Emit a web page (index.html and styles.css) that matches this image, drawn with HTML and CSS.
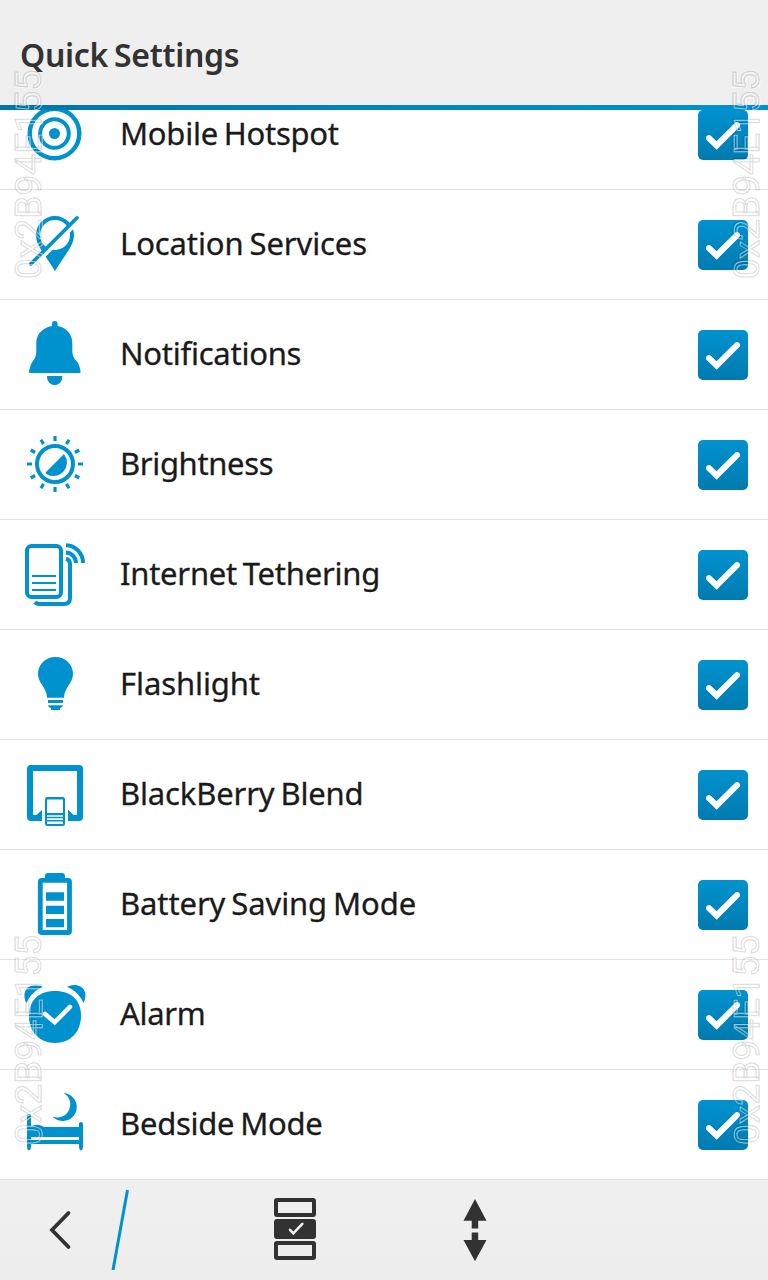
FILE: index.html
```html
<!DOCTYPE html>
<html lang="en">
<head>
  <meta charset="UTF-8" />
  <meta name="viewport" content="width=device-width, initial-scale=1" />
  <title>Quick Settings</title>
  <link rel="stylesheet" href="styles.css">
</head>
<body>

  <!-- Shared shapes -->
  <svg class="defs" width="0" height="0">
    <symbol id="check" viewBox="0 0 50 50">
      <path d="M11 28.2l7.6 7.3L39 15.2" fill="none" stroke="#fff" stroke-width="6" stroke-linecap="round"/>
    </symbol>
    <symbol id="serial" viewBox="0 0 48 220" overflow="visible">
      <g transform="translate(36.500 214) rotate(-90)" fill="none" font-family="Roboto, Liberation Sans, sans-serif" font-size="37">
        <text x="-1" y="1.300" textLength="209" stroke="#fff" stroke-opacity="0.6">0x2B94E155</text>
        <text textLength="209" stroke="#000" stroke-opacity="0.15" stroke-width="1.2">0x2B94E155</text>
      </g>
    </symbol>
  </svg>

  <div class="screen">
    <header class="title-bar">
      <h1>Quick Settings</h1>
    </header>

    <ul class="settings">
      <li>
        <svg class="icon" viewBox="0 0 120 109">
          <circle cx="54.5" cy="53.5" r="24.8" class="line" stroke-width="4.4"/>
          <circle cx="54.5" cy="53.5" r="14.3" class="line" stroke-width="4"/>
          <circle cx="54.5" cy="53.5" r="5.5"/>
        </svg>
        <span class="label hotspot">Mobile Hotspot</span>
        <span class="checkbox"><svg><use href="#check"/></svg></span>
      </li>
      <li>
        <svg class="icon" viewBox="0 0 120 109">
          <path fill-rule="evenodd" d="M55 26a19 19 0 0 1 19 19c0 10-7 17-19 36C43 62 36 55 36 45a19 19 0 0 1 19-19zM55 30a15 15 0 1 0 0 30a15 15 0 0 0 0-30z"/>
          <path d="M33 76.5L79.500 30" stroke="#fff" stroke-width="4"/>
          <path d="M30.8 74L77 27.8" class="line" stroke-width="3.6" stroke-linecap="round"/>
        </svg>
        <span class="label location">Location Services</span>
        <span class="checkbox"><svg><use href="#check"/></svg></span>
      </li>
      <li>
        <svg class="icon" viewBox="0 0 120 109">
          <path d="M52 26v-2.200a2.800 2.800 0 0 1 5.600 0V26C66 27.500 72.300 34 72.300 43v8c0 4 1.200 7 4 9.800C79 63.500 80 68 80.600 71.500q.2 1.500-1.500 1.500H30.500q-1.700 0-1.500-1.500C29.600 68 31 63.500 33 60.800c2.400-2.800 3.300-5.800 3.300-9.800v-8C36.300 34 43 27.500 52 26z"/>
          <path d="M47 76h15.300v1a7.600 8.200 0 0 1-15.300 0z"/>
        </svg>
        <span class="label notifications">Notifications</span>
        <span class="checkbox"><svg><use href="#check"/></svg></span>
      </li>
      <li>
        <svg class="icon" viewBox="0 0 120 109">
          <circle cx="55" cy="54" r="18" class="line" stroke-width="4"/>
          <path d="M64.300 44.400A13.500 13.500 0 0 1 46 63.700Q45 63 46 62L63 45Q63.700 44 64.300 44.400z"/>
          <g class="line" stroke-width="3.200">
            <path d="M55 26v5M55 77v5M27 54h5M78 54h5"/>
            <path d="M55 26v5M55 77v5M27 54h5M78 54h5" transform="rotate(30 55 54)"/>
            <path d="M55 26v5M55 77v5M27 54h5M78 54h5" transform="rotate(60 55 54)"/>
          </g>
        </svg>
        <span class="label brightness">Brightness</span>
        <span class="checkbox"><svg><use href="#check"/></svg></span>
      </li>
      <li>
        <svg class="icon" viewBox="0 0 120 109">
          <g class="line" stroke-width="4">
            <rect x="27" y="26" width="34" height="51" rx="4.500"/>
            <path d="M66 38.700q4 1 4 5V78q0 6-6 6H40q-3.500 0-5-2"/>
            <path d="M66 32.500A10.500 10.500 0 0 1 76 43M66 25.200A17.500 17.500 0 0 1 83 43"/>
          </g>
          <path d="M32 56h24M32 63h24M32 70h24" class="line" stroke-width="2"/>
        </svg>
        <span class="label tethering">Internet Tethering</span>
        <span class="checkbox"><svg><use href="#check"/></svg></span>
      </li>
      <li>
        <svg class="icon" viewBox="0 0 120 109">
          <path d="M55.500 27C65.500 27 73 34.500 73 44c0 9-9 14-9 23.700H47C47 58 38 53 38 44c0-9.500 7.500-17 17.500-17z"/>
          <path d="M48 70h15v3H48zM48 75.300h15q-.5 2-3 3V80h-9v-1.700q-2.500-1-3-3z"/>
        </svg>
        <span class="label flashlight">Flashlight</span>
        <span class="checkbox"><svg><use href="#check"/></svg></span>
      </li>
      <li>
        <svg class="icon" viewBox="0 0 120 109">
          <path d="M42 81H31q-4 0-4-4V29q0-4 4-4h48q4 0 4 4v48q0 4-4 4H68V69.500l5.500 5.500H77V31H33v44h3.500l5.500-5z"/>
          <rect x="46" y="58" width="18" height="27" rx="1.500" class="line" stroke-width="2"/>
          <path d="M46 57.500h18v2H46zM46 73h18v2.200H46z"/>
          <path d="M47 77.500h16M47 80.700h16" class="line" stroke-width="1.400"/>
        </svg>
        <span class="label blend">BlackBerry Blend</span>
        <span class="checkbox"><svg><use href="#check"/></svg></span>
      </li>
      <li>
        <svg class="icon" viewBox="0 0 120 109">
          <path d="M45 28v-2q0-3 3-3h14q3 0 3 3v2z"/>
          <rect x="40.300" y="30.300" width="29.200" height="52.200" rx="1.500" class="line" stroke-width="4.800"/>
          <path d="M46 42.300h18v8.500H46zM46 55.700h18V64H46zM46 69h18v8.300H46z"/>
        </svg>
        <span class="label battery">Battery Saving Mode</span>
        <span class="checkbox"><svg><use href="#check"/></svg></span>
      </li>
      <li>
        <svg class="icon" viewBox="0 0 120 109">
          <path d="M55 31c17 0 26 10 26 25S71 83 55 83 29 71 29 56s9-25 26-25z"/>
          <path d="M26.500 43C22 35 25 25 36 25q4 0 7 2C36 29.500 30 35 26.500 43zM83.500 43C88 35 85 25 74 25q-4 0-7 2c7 2.500 13 8 16.500 16z"/>
          <path d="M45 54l9.700 8.300L70 46.800" fill="none" stroke="#fff" stroke-width="4.500" stroke-linecap="round"/>
        </svg>
        <span class="label alarm">Alarm</span>
        <span class="checkbox"><svg><use href="#check"/></svg></span>
      </li>
      <li>
        <svg class="icon" viewBox="0 0 120 109">
          <path d="M63.500 23A14 14 0 1 1 52.500 46.500A13 13 0 0 0 63.500 23z"/>
          <path d="M27 46q0-2 2-2t2 2v10.500q5-3 10-1l3 1.500H79v-3q0-2 2-2t2 2v22q0 4-2 4.500-2-.5-2-4.500v-2H31v2q0 4-2 4.500-2-.5-2-4.500zM31 67v3h48v-3z" fill-rule="evenodd"/>
        </svg>
        <span class="label bedside">Bedside Mode</span>
        <span class="checkbox"><svg><use href="#check"/></svg></span>
      </li>
    </ul>

    <footer class="action-bar">
      <svg class="back" viewBox="0 0 205 100">
        <path d="M68.500 33L52 50l16.500 17" fill="none" stroke="#323232" stroke-width="3.800" stroke-linecap="round"/>
        <path d="M127.500 10L113 90" fill="none" stroke="#0092cf" stroke-width="3"/>
      </svg>
      <svg class="action" viewBox="0 0 180 100">
        <g fill="none" stroke="#323232" stroke-width="4">
          <rect x="71" y="20" width="38" height="15" rx="1"/>
          <rect x="71" y="63" width="38" height="15" rx="1"/>
        </g>
        <rect x="69" y="39" width="42" height="20" rx="3"/>
        <path d="M85 49.800l3.300 3.500 9-9.500" fill="none" stroke="#efefef" stroke-width="2.600" stroke-linecap="round"/>
      </svg>
      <svg class="action" viewBox="0 0 180 100">
        <path d="M90 19l11.500 21.800h-8.300v7.700h-6.500v-7.700h-8.200zM86.700 52.500h6.500V60h8.300L90 81.300 78.500 60h8.200z"/>
      </svg>
    </footer>

    <svg class="serial top left"><use href="#serial"/></svg>
    <svg class="serial top right"><use href="#serial"/></svg>
    <svg class="serial bottom left"><use href="#serial"/></svg>
    <svg class="serial bottom right"><use href="#serial"/></svg>
  </div>

</body>
</html>
```
FILE: styles.css
```css
* {
  box-sizing: border-box;
}
body {
  margin: 0;
  font-family: 'Noto Sans', 'Open Sans', sans-serif;
  color: #1a1a1a;
  background: #fff;
}
svg {
  display: block;
}
.defs {
  position: absolute;
}
.screen {
  position: relative;
  display: flex;
  flex-direction: column;
  width: 768px;
  height: 1280px;
  overflow: hidden;
}

.title-bar {
  height: 110px;
  padding: 33px 20px 0;
  background: linear-gradient(90deg, #0077a6, #0092cf) bottom / 100% 5px no-repeat #efefef;
}
h1 {
  margin: 0;
  color: #323232;
  font-size: 32px;
  line-height: 44px;
  font-weight: 600;
  letter-spacing: -0.3px;
  word-spacing: -2px;
}

.settings {
  display: flex;
  flex-direction: column;
  justify-content: flex-end;
  height: 1070px;
  margin: 0;
  padding: 0;
  list-style: none;
  overflow: hidden;
}
.settings li {
  display: flex;
  flex: none;
  align-items: center;
  height: 110px;
  padding-right: 20px;
  border-bottom: 1px solid #e2e2e2;
}
.icon {
  flex: none;
  width: 120px;
  height: 109px;
  fill: #0092cf;
}
.line {
  fill: none;
  stroke: #0092cf;
}
.label {
  flex: 1;
  padding-bottom: 4px;
  font-size: 31px;
  line-height: 44px;
  word-spacing: -2px;
  white-space: nowrap;
  -webkit-text-stroke: 0.3px #1a1a1a;
}
.hotspot { letter-spacing: -0.25px; }
.location { letter-spacing: -0.1px; }
.notifications { letter-spacing: -0.25px; }
.brightness { letter-spacing: -0.35px; }
.tethering { letter-spacing: -0.25px; }
.flashlight { letter-spacing: -0.1px; }
.blend { letter-spacing: -0.15px; }
.battery { letter-spacing: -0.1px; }
.alarm { letter-spacing: -0.3px; }
.bedside { letter-spacing: -0.25px; }

.checkbox {
  width: 50px;
  height: 50px;
  border-radius: 5px;
  background: linear-gradient(#0092cf, #007bb0);
}
.checkbox svg {
  width: 50px;
  height: 50px;
}

.action-bar {
  display: flex;
  height: 100px;
  background: linear-gradient(#f0f0f0, #ededed);
}
.action-bar svg {
  height: 100px;
  fill: #323232;
}
.back {
  width: 205px;
}
.action {
  width: 180px;
}

/* outlined serial number along both edges */
.serial {
  position: absolute;
  width: 48px;
  height: 220px;
  overflow: visible;
}
.top { top: 65px; }
.bottom { top: 930px; }
.left { left: 4px; }
.right { left: 722px; }
```
